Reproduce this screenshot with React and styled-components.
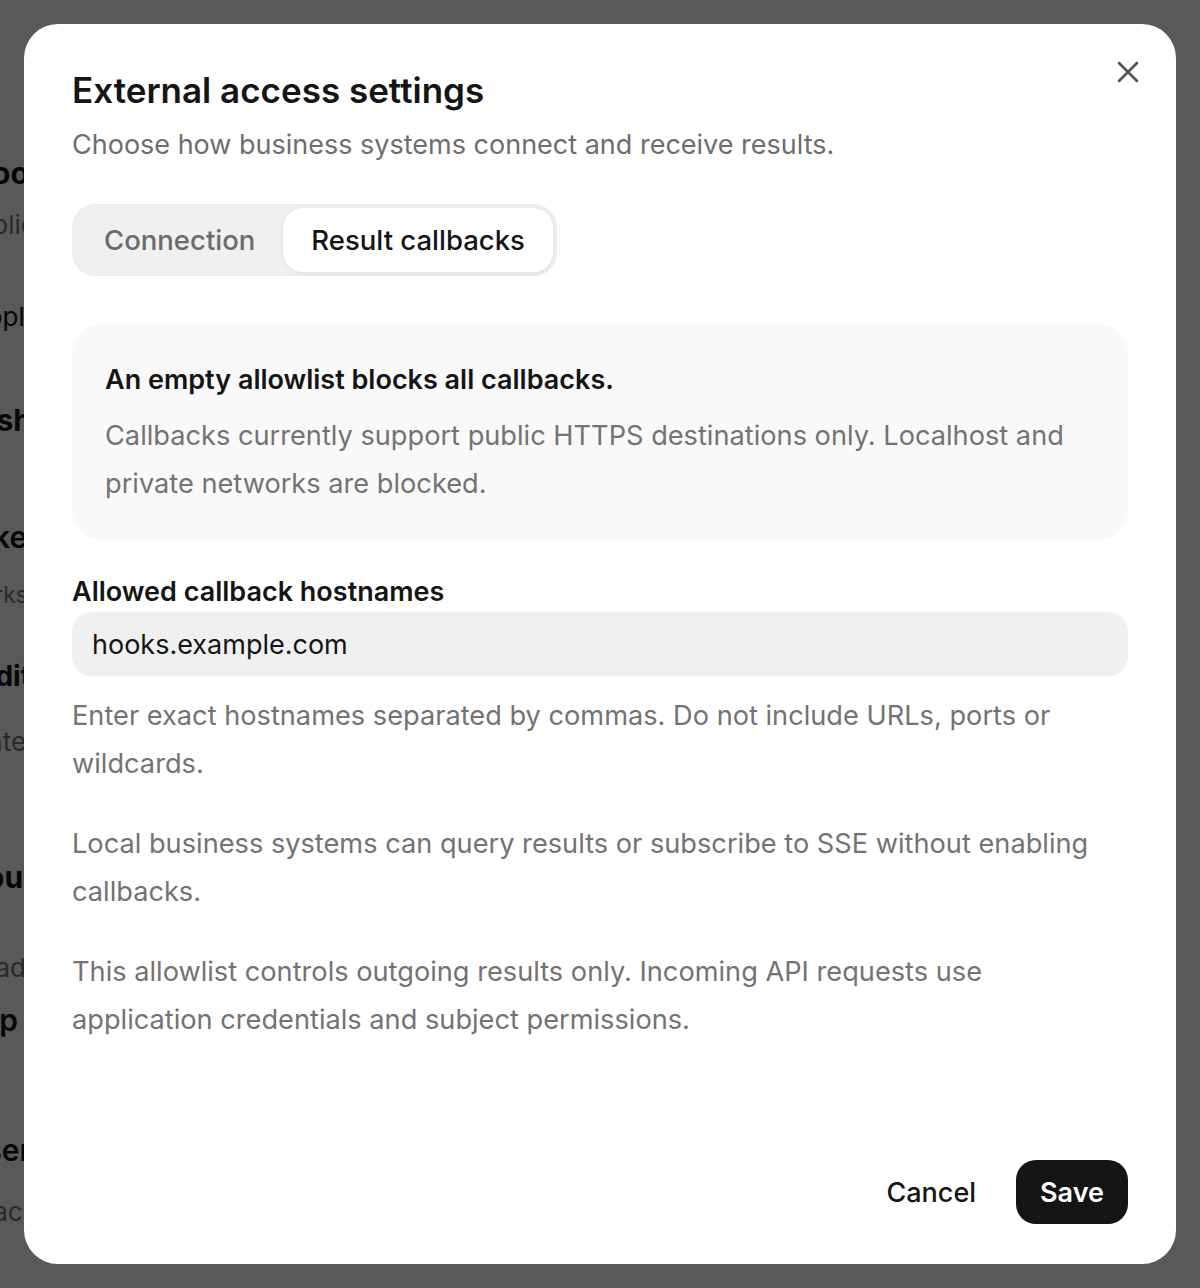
import React from "react";
import styled, { createGlobalStyle } from "styled-components";

const Global = createGlobalStyle`
  html, body { margin: 0; padding: 0; }
  body {
    font-family: Inter, "Noto Sans", "Liberation Sans", sans-serif;
    background: #fff;
    width: 1200px;
    height: 1288px;
    overflow: hidden;
  }
  * { box-sizing: border-box; }
`;

const Page = styled.div`
  width: 1200px;
  height: 1288px;
  background: #fff;
  position: relative;
  overflow: hidden;
`;

const BgColumn = styled.div`
  display: flex;
  flex-direction: column;
  padding-top: 151px;
`;

const BgLine = styled.div`
  width: ${(p) => p.$end}px;
  display: flex;
  justify-content: flex-end;
  white-space: nowrap;
  font-size: ${(p) => p.$size || 26}px;
  font-weight: ${(p) => p.$weight || 400};
  color: ${(p) => (p.$muted ? "#777" : "#151515")};
  margin-top: ${(p) => p.$gap || 0}px;
  line-height: 44px;
`;

const Overlay = styled.div`
  position: fixed;
  inset: 0;
  background: rgba(0, 0, 0, 0.65);
`;

const Dialog = styled.div`
  position: fixed;
  left: 24px;
  top: 24px;
  width: 1152px;
  height: 1240px;
  background: #fff;
  border-radius: 34px;
  padding: 44px 48px 40px 48px;
  display: flex;
  flex-direction: column;
`;

const CloseButton = styled.button`
  position: absolute;
  top: 28px;
  right: 28px;
  width: 40px;
  height: 40px;
  border: none;
  background: transparent;
  display: flex;
  align-items: center;
  justify-content: center;
  padding: 0;
  cursor: pointer;
  color: #555;
`;

const Title = styled.h2`
  margin: 0;
  font-size: 35px;
  line-height: 44px;
  font-weight: 600;
  color: #151515;
`;

const Subtitle = styled.p`
  margin: 15px 0 0;
  font-size: 27px;
  line-height: 36px;
  color: #6e6e6e;
  font-weight: 400;
`;

const TabList = styled.div`
  margin-top: 41px;
  align-self: flex-start;
  display: flex;
  padding: 4px;
  background: #f0f0f0;
  border-radius: 24px;
  box-shadow: inset 0 0 0 1px #ececec;
`;

const Tab = styled.button`
  height: 64px;
  padding: 0 28px;
  border: none;
  border-radius: 20px;
  font-family: inherit;
  font-size: 27.5px;
  font-weight: 500;
  background: ${(p) => (p.$active ? "#fff" : "transparent")};
  color: ${(p) => (p.$active ? "#151515" : "#6b6b6b")};
  box-shadow: ${(p) =>
    p.$active ? "0 0 0 1.5px #e8e8e8, 0 2px 4px rgba(0,0,0,0.06)" : "none"};
  cursor: pointer;
`;

const InfoBox = styled.div`
  margin-top: 48px;
  background: #f9f9f9;
  border-radius: 30px;
  padding: 36px 33px 32px;
`;

const InfoTitle = styled.div`
  font-size: 27px;
  line-height: 40px;
  font-weight: 560;
  color: #151515;
`;

const Muted = styled.p`
  margin: ${(p) => p.$mt || 0}px 0 0;
  max-width: 1040px;
  font-size: 27.2px;
  line-height: 48px;
  color: #737373;
`;

const Label = styled.label`
  margin-top: 36px;
  font-size: 27px;
  line-height: 32px;
  font-weight: 560;
  color: #151515;
`;

const Input = styled.input`
  margin-top: 4px;
  height: 64px;
  border: none;
  outline: none;
  border-radius: 20px;
  background: #f0f0f0;
  padding: 0 20px;
  font-family: inherit;
  font-size: 27px;
  color: #151515;
`;

const Footer = styled.div`
  margin-top: auto;
  display: flex;
  justify-content: flex-end;
  align-items: center;
  gap: 16px;
`;

const GhostButton = styled.button`
  height: 64px;
  padding: 0 24px;
  border: none;
  background: transparent;
  border-radius: 20px;
  font-family: inherit;
  font-size: 27px;
  font-weight: 500;
  color: #151515;
  cursor: pointer;
`;

const PrimaryButton = styled.button`
  height: 64px;
  padding: 0 24px;
  border: none;
  background: #151515;
  border-radius: 20px;
  font-family: inherit;
  font-size: 27px;
  font-weight: 600;
  color: #fff;
  cursor: pointer;
`;

const bgLines = [
  { t: "Webhooks", size: 30, weight: 700, gap: 0, end: 63 },
  { t: "Applications", muted: true, gap: 8, end: 110 },
  { t: "People", gap: 48, end: 40 },
  { t: "Push", size: 30, weight: 700, gap: 59, end: 32 },
  { t: "Tokens", size: 30, weight: 600, gap: 73, end: 62 },
  { t: "Networks", muted: true, size: 23, gap: 14, end: 28 },
  { t: "Audit log", size: 28, weight: 700, gap: 37, end: 80 },
  { t: "Content", muted: true, gap: 22, end: 50 },
  { t: "Sources", size: 30, weight: 700, gap: 91, end: 87 },
  { t: "Load", muted: true, gap: 47, end: 26 },
  { t: "Step", size: 30, weight: 600, gap: 8, end: 18 },
  { t: "Users", size: 30, weight: 600, gap: 86, end: 48 },
  { t: "Each", muted: true, gap: 18, end: 38 },
];

export default function App() {
  return (
    <>
      <Global />
      <Page>
        <BgColumn aria-hidden="true">
          {bgLines.map((l, i) => (
            <BgLine
              key={i}
              $size={l.size}
              $weight={l.weight}
              $muted={l.muted}
              $gap={l.gap}
              $end={l.end}
            >
              {l.t}
            </BgLine>
          ))}
        </BgColumn>
        <Overlay />
        <Dialog role="dialog" aria-modal="true">
          <CloseButton aria-label="Close">
            <svg width="22" height="22" viewBox="0 0 22 22" fill="none">
              <path
                d="M2 2L20 20M20 2L2 20"
                stroke="currentColor"
                strokeWidth="2.6"
                strokeLinecap="round"
              />
            </svg>
          </CloseButton>
          <Title>External access settings</Title>
          <Subtitle>Choose how business systems connect and receive results.</Subtitle>
          <TabList>
            <Tab>Connection</Tab>
            <Tab $active>Result callbacks</Tab>
          </TabList>
          <InfoBox>
            <InfoTitle>An empty allowlist blocks all callbacks.</InfoTitle>
            <Muted $mt={12}>
              Callbacks currently support public HTTPS destinations only. Localhost and
              private networks are blocked.
            </Muted>
          </InfoBox>
          <Label>Allowed callback hostnames</Label>
          <Input defaultValue="hooks.example.com" />
          <Muted $mt={16}>
            Enter exact hostnames separated by commas. Do not include URLs, ports or
            wildcards.
          </Muted>
          <Muted $mt={32}>
            Local business systems can query results or subscribe to SSE without enabling
            callbacks.
          </Muted>
          <Muted $mt={32}>
            This allowlist controls outgoing results only. Incoming API requests use
            application credentials and subject permissions.
          </Muted>
          <Footer>
            <GhostButton>Cancel</GhostButton>
            <PrimaryButton>Save</PrimaryButton>
          </Footer>
        </Dialog>
      </Page>
    </>
  );
}
